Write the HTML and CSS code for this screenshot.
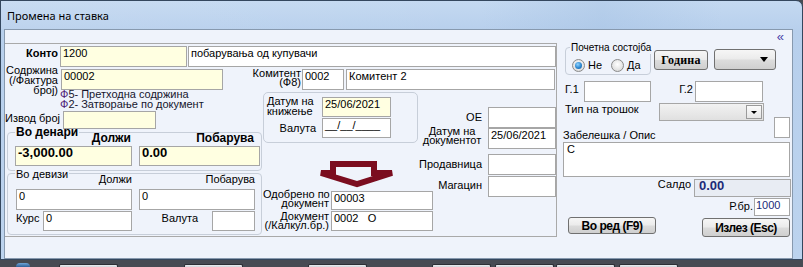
FILE: index.html
```html
<!DOCTYPE html>
<html lang="mk">
<head>
<meta charset="utf-8">
<title>Промена на ставка</title>
<link rel="stylesheet" href="styles.css">
</head>
<body>
<div class="window">
  <div class="titlebar"><span class="title">Промена на ставка</span></div>
  <div class="client">
    <div class="main">
      <div class="row r-konto">
        <div class="lbl l-konto">Конто</div>
        <div class="fld y w-k1">1200</div>
        <div class="fld w-k2">побарувања од купувачи</div>
      </div>
      <div class="row r-sod">
        <div class="lbl l-sod">Содржина<br>(/Фактура<br>број)</div>
        <div class="fld y w-sod">00002</div>
        <div class="lbl l-kom">Комитент<br>(Ф8)</div>
        <div class="fld w-kom1">0002</div>
        <div class="fld w-kom2">Комитент 2</div>
      </div>
      <div class="section">
        <div class="col-a">
          <div class="hints"><span class="fk">Ф</span>5- Претходна содржина<br><span class="fk">Ф</span>2- Затворање по документ</div>
          <div class="row r-izvod">
            <div class="lbl l-izvod">Извод број</div>
            <div class="fld y w-izvod"></div>
          </div>
          <div class="group g-den">
            <div class="gt">Во денари</div>
            <div class="ghead b">
              <div class="gc c1">Должи</div>
              <div class="gc c2">Побарува</div>
            </div>
            <div class="gfields">
              <div class="fld y b13 c1">-3,000.00</div>
              <div class="fld y b13 c2">0.00</div>
            </div>
          </div>
          <div class="group g-dev">
            <div class="gt n">Во девизи</div>
            <div class="ghead">
              <div class="gc d1">Должи</div>
              <div class="gc d2">Побарува</div>
            </div>
            <div class="gfields">
              <div class="fld d1">0</div>
              <div class="fld d2">0</div>
            </div>
            <div class="row r-kurs">
              <div class="lbl l-kurs">Курс</div>
              <div class="fld w-kurs">0</div>
              <div class="lbl l-val">Валута</div>
              <div class="fld w-val"></div>
            </div>
          </div>
        </div>
        <div class="col-b">
          <div class="group g-dat">
            <div class="row r-dat1">
              <div class="lbl l-dat">Датум на<br>книжење</div>
              <div class="fld y w-dat">25/06/2021</div>
            </div>
            <div class="row r-dat2">
              <div class="lbl l-dval">Валута</div>
              <div class="fld w-dat">__/__/____</div>
            </div>
          </div>
          <svg class="arrow" width="82" height="34" viewBox="0 0 82 34" aria-hidden="true">
            <polygon points="17,7 58,7 58,16 76,16 41,27 5,16 17,16" fill="none" stroke="#7b0d1f" stroke-width="6" stroke-linejoin="miter" stroke-miterlimit="2.5"/>
          </svg>
          <div class="row r-odo">
            <div class="lbl l-odo">Одобрено по<br>документ</div>
            <div class="fld w-odo h19">00003</div>
          </div>
          <div class="row r-dok">
            <div class="lbl l-odo l-dok">Документ<br>(/Калкул.бр.)</div>
            <div class="fld w-odo h20">0002&nbsp;&nbsp; О</div>
          </div>
        </div>
        <div class="col-c">
          <div class="row r-oe">
            <div class="lbl l-c l-oe">ОЕ</div>
            <div class="fld w-c"></div>
          </div>
          <div class="row r-ddok">
            <div class="lbl l-c l-ddok">Датум на<br>документот</div>
            <div class="fld w-c">25/06/2021</div>
          </div>
          <div class="row r-prod">
            <div class="lbl l-c l-prod">Продавница</div>
            <div class="fld w-c"></div>
          </div>
          <div class="row r-mag">
            <div class="lbl l-c l-mag">Магацин</div>
            <div class="fld w-c"></div>
          </div>
        </div>
      </div>
    </div>
    <div class="side">
      <div class="collapse">«</div>
      <div class="row r-top">
        <div class="group g-poc">
          <div class="pt">Почетна состојба</div>
          <div class="radios">
            <span class="radio on"></span><span class="rl">Не</span>
            <span class="radio r2"></span><span class="rl">Да</span>
          </div>
        </div>
        <div class="btn b-god">Година</div>
        <div class="btn b-dd"><span class="tri"></span></div>
      </div>
      <div class="row r-g">
        <div class="lbl l-g1">Г.1</div>
        <div class="fld w-g1"></div>
        <div class="lbl l-g2">Г.2</div>
        <div class="fld w-g2"></div>
      </div>
      <div class="row r-tip">
        <div class="lbl l-tip">Тип на трошок</div>
        <div class="combo"><span class="cbtn"><span class="tri sm"></span></span></div>
        <div class="fld w-sq"></div>
      </div>
      <div class="lbl l-zab">Забелешка / Опис</div>
      <div class="fld memo">С</div>
      <div class="row r-sal">
        <div class="lbl l-sal">Салдо</div>
        <div class="fld saldo">0.00</div>
      </div>
      <div class="row r-rbr">
        <div class="lbl l-rbr">Р.бр.</div>
        <div class="fld w-rbr">1000</div>
      </div>
      <div class="row r-btn">
        <div class="btn b-ok">Во ред (F9)</div>
        <div class="btn b-esc">Излез (Esc)</div>
      </div>
    </div>
  </div>
</div>
<div class="taskbar">
  <span class="orb"></span>
  <span class="tab t1"></span><span class="tab t2"></span><span class="tab t3"></span><span class="tab t4"></span><span class="tab t5"></span><span class="tab t6"></span><span class="tab t7"></span>
</div>
</body>
</html>
```

FILE: styles.css
```css
* { box-sizing: border-box; margin: 0; padding: 0; }
body {
  width: 803px; height: 267px; overflow: hidden;
  background: #474b53;
  font-family: "Liberation Sans", Arial, sans-serif;
  font-size: 11px; color: #000;
}
.window {
  width: 803px; height: 260px;
  border: 1px solid #34475e;
  border-radius: 0 7px 0 0;
  background: linear-gradient(180deg, #c4d9f1 0%, #b7cfec 12%, #bcd3ee 100%);
  display: flex; flex-direction: column;
}
.titlebar {
  height: 28px; flex: none;
  padding-left: 6px;
  display: flex; align-items: center;
  background: linear-gradient(90deg, rgba(255,255,255,0.08), rgba(255,255,255,0) 60%, rgba(160,190,225,0.35) 75%, rgba(255,255,255,0) 90%);
}
.title {
  font-family: "Noto Sans", "Open Sans", sans-serif;
  font-size: 11px; color: #000; margin-top: 1px;
}
.client {
  margin-left: 3px; width: 789px; height: 230px; flex: none;
  border: 1px solid #8799ae;
  background: #eff3fb;
  display: flex; align-items: flex-start;
}
.main {
  width: 552px; height: 194px; margin-top: 13px; flex: none;
  border-top: 1px solid #a9a9a9; border-right: 1px solid #a9a9a9; border-bottom: 1px solid #a9a9a9;
}
.row { display: flex; align-items: flex-start; flex: none; }
.lbl { line-height: 14px; white-space: nowrap; flex: none; }
.b { font-weight: bold; }
.fld {
  height: 21px; flex: none;
  border: 1px solid #a6a6a6;
  background: #fff;
  padding-left: 2px;
  line-height: 12px; white-space: nowrap; overflow: hidden;
}
.fld.y { background: #ffffe1; }
.b13 { font-weight: bold; font-size: 13px; }

/* row 1 */
.r-konto { margin-top: 2px; height: 21px; }
.l-konto { width: 55px; padding-right: 2px; text-align: right; font-weight: bold; }
.w-k1 { width: 127px; }
.w-k2 { width: 368px; margin-left: 1px; }

/* row 2 */
.r-sod { height: 24px; }
.l-sod { width: 55px; padding-right: 2px; text-align: right; line-height: 10px; margin-top: -2px; }
.w-sod { width: 162px; margin: 2px 0 0 1px; }
.l-kom { width: 78px; text-align: right; line-height: 9px; margin-top: 2px; }
.w-kom1 { width: 42px; margin: 2px 0 0 1px; }
.w-kom2 { width: 209px; margin: 2px 0 0 2px; }

.section { display: flex; align-items: flex-start; }
.col-a { width: 258px; flex: none; }
.col-b { width: 155px; flex: none; display: flex; flex-direction: column; }
.col-c { width: 138px; flex: none; }

.hints { margin: -2px 0 0 55px; line-height: 10px; white-space: nowrap; color: #16162e; }
.fk { color: #4e1c78; }
.r-izvod { margin-top: 2px; height: 18px; }
.l-izvod { width: 54px; text-align: right; margin-right: 4px; }
.w-izvod { width: 93px; height: 18px; }

.group { border: 1px solid #c7ced9; border-radius: 4px; flex: none; }
.g-den { margin: 3px 0 0 2px; width: 255px; height: 39px; }
.g-dev { margin: 2px 0 0 2px; width: 255px; height: 62px; }
.gt { margin: -7px 0 0 7px; padding: 0 1px; width: max-content; line-height: 13px; font-weight: bold; font-size: 12px; white-space: nowrap; background: #eff3fb; }
.gt.n { font-weight: normal; font-size: 11px; margin-top: -6px; }
.ghead { display: flex; margin-top: -7px; line-height: 13px; height: 13px; font-size: 12px; }
.g-dev .ghead { margin-top: -8px; font-size: 11px; }
.gc { text-align: right; flex: none; }
.c1 { margin-left: 7px; width: 117px; }
.c2 { margin-left: 7px; width: 121px; }
.ghead .c1 { padding-right: 1px; }
.ghead .c2 { padding-right: 6px; }
.gfields { display: flex; margin-top: 1px; }
.g-den .gfields .fld { height: 20px; }
.g-dev .gfields { margin-top: 3px; }
.d1 { margin-left: 8px; width: 116px; }
.d2 { margin-left: 7px; width: 116px; }
.r-kurs { margin-top: 1px; height: 20px; }
.l-kurs { margin-left: 8px; width: 27px; }
.w-kurs { width: 89px; height: 20px; }
.l-val { width: 80px; text-align: right; padding-right: 14px; }
.w-val { width: 43px; height: 20px; }

/* col b */
.g-dat { margin-top: 1px; width: 155px; height: 51px; border-radius: 5px; }
.r-dat1 { margin-top: 3px; height: 20px; }
.l-dat { width: 54px; margin-left: 3px; line-height: 10px; margin-top: 0; }
.w-dat { width: 69px; height: 20px; margin-left: 1px; }
.r-dat1 .w-dat { margin-top: 1px; }
.r-dat2 { margin-top: 2px; height: 20px; }
.l-dval { width: 54px; margin-left: 3px; text-align: right; padding-right: 5px; margin-top: 3px; }
.arrow { display: block; margin: 14px 0 0 53px; flex: none; }
.r-odo { height: 19px; }
.l-odo { width: 67px; text-align: right; padding-right: 1px; line-height: 9px; margin-top: -1px; }
.l-dok { margin-top: 1px; }
.w-odo { width: 102px; margin-left: 1px; }
.h19 { height: 19px; }
.h20 { height: 20px; }
.r-dok { margin-top: 1px; height: 20px; }

/* col c */
.l-c { width: 64px; text-align: right; }
.w-c { width: 68px; margin-left: 6px; }
.r-oe { margin-top: 16px; height: 21px; }
.l-oe { margin-top: 3px; }
.r-ddok { height: 21px; }
.l-ddok { text-align: center; padding-left: 4px; line-height: 9px; margin-top: -1px; }
.r-prod { margin-top: 5px; height: 21px; }
.l-prod { margin-top: 3px; }
.r-mag { margin-top: 1px; height: 21px; }
.l-mag { margin-top: 2px; }

/* side */
.side { width: 235px; flex: none; display: flex; flex-direction: column; }
.collapse { height: 13px; line-height: 13px; text-align: right; padding-right: 8px; color: #4a3ea8; font-size: 13px; }
.r-top { height: 32px; }
.g-poc { margin: 4px 0 0 8px; width: 86px; height: 28px; }
.pt { display: block; width: max-content; margin: -6px 0 0 4px; padding: 0 1px; font-size: 10px; line-height: 12px; white-space: nowrap; background: #eff3fb; }
.radios { display: flex; align-items: center; margin: 5px 0 0 6px; font-size: 11px; height: 13px; }
.radio {
  width: 13px; height: 13px; border-radius: 50%; flex: none;
  border: 1px solid #8a8a8a;
  background: radial-gradient(circle at 50% 40%, #ffffff 0%, #e4e4e4 60%, #cfcfcf 100%);
  display: flex; align-items: center; justify-content: center;
}
.radio.on::after {
  content: ""; width: 7px; height: 7px; border-radius: 50%;
  background: radial-gradient(circle at 40% 35%, #8fd3ff 0%, #2c86cf 55%, #175a96 100%);
}
.radio.r2 { margin-left: 9px; }
.rl { margin-left: 3px; line-height: 13px; }
.btn {
  flex: none;
  border: 1px solid #707070; border-radius: 3px;
  background: linear-gradient(180deg, #f6f6f6 0%, #ebebeb 48%, #dcdcdc 52%, #cfcfcf 100%);
  display: flex; align-items: center; justify-content: center;
  font-weight: bold; font-size: 12px; letter-spacing: -0.5px; white-space: nowrap;
}
.b-god { margin: 7px 0 0 3px; width: 54px; height: 20px; font-family: "Liberation Serif", "DejaVu Serif", serif; font-size: 12px; letter-spacing: 0.2px; }
.b-dd { margin: 6px 0 0 6px; width: 62px; height: 21px; justify-content: flex-end; padding-right: 7px; }
.tri { width: 0; height: 0; border-left: 4px solid transparent; border-right: 4px solid transparent; border-top: 5px solid #000; }
.tri.sm { border-left-width: 3px; border-right-width: 3px; border-top-width: 3px; }
.r-g { margin-top: 6px; height: 21px; }
.l-g1 { margin: 1px 0 0 8px; width: 19px; }
.w-g1 { width: 67px; }
.l-g2 { width: 44px; text-align: right; padding-right: 2px; margin-top: 1px; }
.w-g2 { width: 68px; }
.r-tip { margin-top: 1px; height: 18px; }
.l-tip { margin: -1px 0 0 8px; width: 94px; }
.combo {
  width: 105px; height: 18px; flex: none;
  border: 1px solid #a6a6a6;
  background: linear-gradient(180deg, #f2f2f2, #e0e0e0);
  display: flex; justify-content: flex-end; align-items: center; padding-right: 1px;
}
.cbtn {
  width: 16px; height: 14px;
  border: 1px solid #9a9a9a; background: linear-gradient(180deg, #fbfbfb, #e6e6e6);
  display: flex; align-items: center; justify-content: center;
}
.w-sq { width: 16px; height: 21px; margin: 14px 0 0 10px; }
.l-zab { margin: 7px 0 0 6px; }
.memo { margin-left: 6px; width: 227px; height: 35px; padding-left: 3px; }
.r-sal { margin-top: 2px; height: 18px; }
.l-sal { width: 137px; text-align: right; padding-right: 3px; margin-top: -2px; }
.saldo { width: 97px; height: 18px; background: #e8ecf3; color: #1b2a78; font-weight: bold; font-size: 13px; padding-left: 4px; line-height: 11px; }
.r-rbr { margin-top: 1px; height: 18px; }
.l-rbr { width: 197px; text-align: right; padding-right: 1px; margin-top: 1px; }
.w-rbr { width: 36px; height: 18px; color: #1b2a78; padding-left: 1px; }
.r-btn { margin-top: 1px; }
.b-ok { margin-left: 11px; width: 88px; height: 17px; }
.b-esc { margin: 1px 0 0 46px; width: 88px; height: 19px; }

.taskbar { height: 7px; display: flex; align-items: flex-end; }
.orb { width: 14px; height: 4px; margin-left: 16px; border-radius: 7px 7px 0 0; background: linear-gradient(180deg, #6fa6d8, #2d5f96); flex: none; }
.tab { height: 3px; width: 59px; flex: none; background: linear-gradient(180deg, #eceef1, #cfd3d8); border: 1px solid #2c2f35; border-bottom: none; border-radius: 2px 2px 0 0; }
.t1 { margin-left: 29px; }
.t2 { margin-left: 66px; }
.t3 { margin-left: 65px; }
.t4 { margin-left: 65px; }
.t5 { margin-left: 4px; }
.t6 { margin-left: 2px; }
.t7 { margin-left: 4px; }
```
